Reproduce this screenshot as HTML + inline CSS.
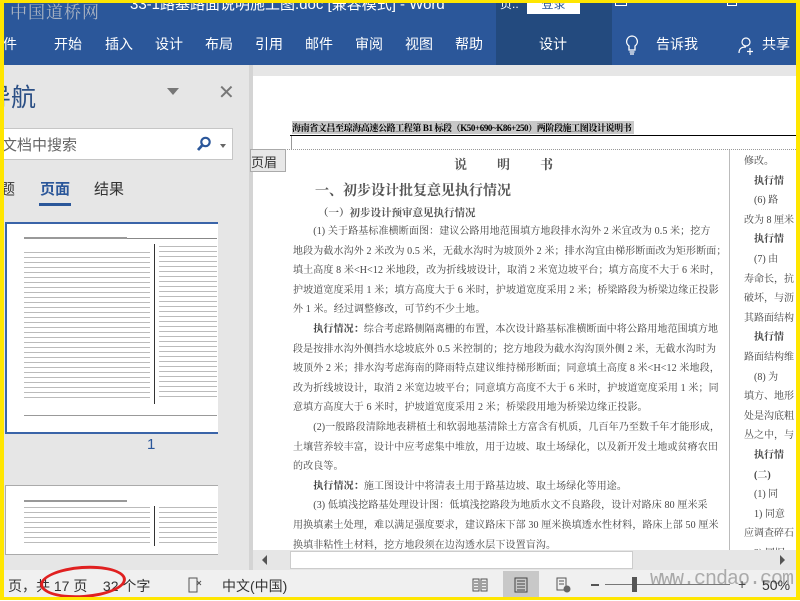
<!DOCTYPE html>
<html><head><meta charset="utf-8"><style>
*{margin:0;padding:0;box-sizing:border-box}
body{width:800px;height:600px;overflow:hidden;background:#fff;font-family:"Liberation Sans","Noto Sans CJK SC",sans-serif;position:relative}
.a{position:absolute;white-space:nowrap}
.tb{left:0;top:0;width:800px;height:65px;background:#2b579a}
.tab{top:34px;color:#fff;font-size:14px}
.doc{font-family:"Liberation Serif","Noto Serif CJK SC","Noto Sans CJK SC",serif;color:#444;font-size:10px}
.lines{background:repeating-linear-gradient(#bbb 0 1px,transparent 1px 5px)}
.body div{white-space:nowrap}
</style></head><body>
<div class="a tb"></div>
<div class="a" style="left:496px;top:0;width:116px;height:65px;background:#234a7e"></div>
<div class="a" style="left:10px;top:-2px;font-size:17px;color:#a9b3c3;letter-spacing:1px;font-family:'Noto Serif CJK SC',serif">中国道桥网</div>
<div class="a" style="left:130px;top:-7px;color:#fff;font-size:15px">33-1路基路面说明施工图.doc [兼容模式] - Word</div>
<div class="a" style="left:500px;top:-5px;color:#fff;font-size:12px">页..</div>
<div class="a" style="left:527px;top:0;width:53px;height:14px;background:#fff;color:#2b579a;font-size:12px;text-align:center;line-height:8px">登录</div>
<div class="a" style="left:615px;top:0;width:12px;height:6px;border:1px solid #fff;border-top:none"></div>
<div class="a" style="left:727px;top:0;width:10px;height:6px;border:1px solid #fff;border-top:none"></div>
<div class="a tab" style="left:3px">件</div>
<div class="a tab" style="left:54px">开始</div>
<div class="a tab" style="left:105px">插入</div>
<div class="a tab" style="left:155px">设计</div>
<div class="a tab" style="left:205px">布局</div>
<div class="a tab" style="left:255px">引用</div>
<div class="a tab" style="left:305px">邮件</div>
<div class="a tab" style="left:355px">审阅</div>
<div class="a tab" style="left:405px">视图</div>
<div class="a tab" style="left:455px">帮助</div>
<div class="a tab" style="left:539px">设计</div>
<svg class="a" style="left:624px;top:34px" width="16" height="22"><path d="M8 2a5.5 5.5 0 0 0-3 10v4h6v-4A5.5 5.5 0 0 0 8 2zM5.5 18h5M6 20h4" fill="none" stroke="#fff" stroke-width="1.3"/></svg>
<div class="a tab" style="left:656px">告诉我</div>
<svg class="a" style="left:738px;top:36px" width="18" height="20"><circle cx="8" cy="6" r="4" fill="none" stroke="#fff" stroke-width="1.2"/><path d="M1 17c0-5 3-6 7-6M12 12v7M9 15.5h6" fill="none" stroke="#fff" stroke-width="1.2"/></svg>
<div class="a tab" style="left:762px">共享</div>
<!-- nav pane -->
<div class="a" style="left:0;top:65px;width:253px;height:505px;background:#e6e6e6"></div>
<div class="a" style="left:-14px;top:78px;font-size:25px;color:#2b4f85">导航</div>
<div class="a" style="left:167px;top:88px;width:0;height:0;border-left:6px solid transparent;border-right:6px solid transparent;border-top:7px solid #777"></div>
<div class="a" style="left:218px;top:80px;font-size:20px;color:#777">✕</div>
<div class="a" style="left:0;top:128px;width:233px;height:32px;background:#fff;border:1px solid #c6c6c6"></div>
<div class="a" style="left:2px;top:134px;font-size:15px;color:#666">文档中搜索</div>
<svg class="a" style="left:196px;top:136px" width="16" height="16"><circle cx="9.5" cy="6" r="4.2" fill="none" stroke="#2b579a" stroke-width="2.2"/><path d="M6.5 9L2 14" stroke="#2b579a" stroke-width="2.8"/></svg>
<div class="a" style="left:220px;top:144px;border-left:3px solid transparent;border-right:3px solid transparent;border-top:4px solid #666"></div>
<div class="a" style="left:0;top:178px;font-size:15px;color:#333">题</div>
<div class="a" style="left:40px;top:178px;font-size:15px;color:#2b579a;font-weight:bold">页面</div>
<div class="a" style="left:94px;top:178px;font-size:15px;color:#333">结果</div>
<div class="a" style="left:39px;top:203px;width:32px;height:3px;background:#2b579a"></div>
<div class="a" style="left:5px;top:222px;width:213px;height:212px;background:#fff;border:2px solid #3a64a8;border-right:none"></div>
<div class="a" style="left:24px;top:237px;width:103px;height:2px;background:#999"></div>
<div class="a" style="left:127px;top:238px;width:90px;height:1px;background:#888"></div>
<div class="a lines" style="left:24px;top:252px;width:126px;height:150px"></div>
<div class="a" style="left:154px;top:244px;width:1px;height:160px;background:#333"></div>
<div class="a lines" style="left:159px;top:246px;width:58px;height:152px"></div>
<div class="a" style="left:24px;top:415px;width:193px;height:1px;background:#999"></div>
<div class="a" style="left:147px;top:436px;font-size:15px;color:#2b579a">1</div>
<div class="a" style="left:5px;top:485px;width:213px;height:70px;background:#fff;border:1px solid #aaa;border-right:none"></div>
<div class="a" style="left:24px;top:500px;width:103px;height:2px;background:#999"></div>
<div class="a lines" style="left:24px;top:507px;width:126px;height:40px"></div>
<div class="a" style="left:154px;top:506px;width:1px;height:40px;background:#333"></div>
<div class="a lines" style="left:159px;top:507px;width:58px;height:40px"></div>
<!-- doc area -->
<div class="a" style="left:249px;top:65px;width:551px;height:11px;background:#e6e6e6"></div>
<div class="a" style="left:249px;top:65px;width:4px;height:505px;background:#d4d4d4"></div>
<div class="a" style="left:292px;top:121px;width:342px;height:13px;background:#c8c8c8"></div>
<div class="a doc" style="left:292px;top:121px;font-size:9px;color:#000;font-weight:bold;letter-spacing:-0.4px">海南省文昌至琼海高速公路工程第 B1 标段（K50+690~K86+250）两阶段施工图设计说明书</div>
<div class="a" style="left:290px;top:135px;width:510px;height:1px;background:#000"></div>
<div class="a" style="left:291px;top:136px;width:1px;height:13px;background:#999"></div>
<div class="a" style="left:253px;top:149px;width:547px;border-top:1px dotted #999"></div>
<div class="a" style="left:250px;top:149px;width:36px;height:23px;background:#e8e8e8;border:1px solid #aaa;font-size:13px;color:#333;padding:2px 0 0 0">页眉</div>
<div class="a" style="left:729px;top:150px;width:1px;height:400px;background:#bbb"></div>
<div class="a doc" style="left:454px;top:154px;font-size:13px;font-weight:bold;color:#555;letter-spacing:30px">说明书</div>
<div class="a doc" style="left:315px;top:180px;font-size:14px;font-weight:bold;color:#555">一、初步设计批复意见执行情况</div>
<div class="a doc" style="left:318px;top:205px;font-size:10.5px;font-weight:bold;color:#555">（一）初步设计预审意见执行情况</div>
<div class="a" style="left:253px;top:218px;width:476px;height:332px;overflow:hidden">
<div class="a doc body" style="left:40px;top:4px;line-height:19.6px;letter-spacing:0.12px">
<div>　　(1) 关于路基标准横断面图：建议公路用地范围填方地段排水沟外 2 米宜改为 0.5 米；挖方</div>
<div>地段为截水沟外 2 米改为 0.5 米，无截水沟时为坡顶外 2 米；排水沟宜由梯形断面改为矩形断面；</div>
<div>填土高度 8 米&lt;H&lt;12 米地段，改为折线坡设计，取消 2 米宽边坡平台；填方高度不大于 6 米时，</div>
<div>护坡道宽度采用 1 米；填方高度大于 6 米时，护坡道宽度采用 2 米；桥梁路段为桥梁边缘正投影</div>
<div>外 1 米。经过调整修改，可节约不少土地。</div>
<div>　　<b>执行情况：</b>综合考虑路侧隔离栅的布置，本次设计路基标准横断面中将公路用地范围填方地</div>
<div>段是按排水沟外侧挡水埝坡底外 0.5 米控制的；挖方地段为截水沟沟顶外侧 2 米，无截水沟时为</div>
<div>坡顶外 2 米；排水沟考虑海南的降雨特点建议维持梯形断面；同意填土高度 8 米&lt;H&lt;12 米地段，</div>
<div>改为折线坡设计，取消 2 米宽边坡平台；同意填方高度不大于 6 米时，护坡道宽度采用 1 米；同</div>
<div>意填方高度大于 6 米时，护坡道宽度采用 2 米；桥梁段用地为桥梁边缘正投影。</div>
<div>　　(2)一般路段清除地表耕植土和软弱地基清除土方富含有机质，几百年乃至数千年才能形成，</div>
<div>土壤营养较丰富，设计中应考虑集中堆放，用于边坡、取土场绿化，以及新开发土地或贫瘠农田</div>
<div>的改良等。</div>
<div>　　<b>执行情况：</b>施工图设计中将清表土用于路基边坡、取土场绿化等用途。</div>
<div>　　(3) 低填浅挖路基处理设计图：低填浅挖路段为地质水文不良路段，设计对路床 80 厘米采</div>
<div>用换填素土处理，难以满足强度要求，建议路床下部 30 厘米换填透水性材料，路床上部 50 厘米</div>
<div>换填非粘性土材料，挖方地段须在边沟透水层下设置盲沟。</div>
</div></div>
<div class="a doc" style="left:744px;top:152px;line-height:19.6px;overflow:hidden;width:52px;height:398px">
<div>修改。</div><div>　<b>执行情</b></div><div>　(6) 路</div><div>改为 8 厘米</div><div>　<b>执行情</b></div><div>　(7) 由</div><div>寿命长，抗</div><div>破坏，与沥</div><div>其路面结构</div><div>　<b>执行情</b></div><div>路面结构维</div><div>　(8) 为</div><div>填方、地形</div><div>处是沟底粗</div><div>丛之中，与</div><div>　<b>执行情</b></div><div>　<b>(二)</b></div><div>　(1) 同</div><div>　1) 同意</div><div>应调查碎石</div><div>　2) 同旧</div>
</div>
<!-- hscroll -->
<div class="a" style="left:253px;top:550px;width:543px;height:20px;background:#e6e6e6"></div>
<div class="a" style="left:262px;top:555px;border-top:5px solid transparent;border-bottom:5px solid transparent;border-right:5px solid #555"></div>
<div class="a" style="left:290px;top:551px;width:343px;height:18px;background:#fff;border:1px solid #ccc"></div>
<div class="a" style="left:780px;top:555px;border-top:5px solid transparent;border-bottom:5px solid transparent;border-left:5px solid #555"></div>
<!-- status -->
<div class="a" style="left:0;top:570px;width:800px;height:30px;background:#f0f0f0"></div>
<div class="a" style="left:8px;top:576px;font-size:14px;color:#333">页，共 17 页&nbsp;&nbsp;&nbsp;&nbsp;32 个字</div>
<div class="a" style="left:40px;top:566px;width:86px;height:32px;border:3px solid #e02020;border-radius:50%;transform:rotate(-4deg)"></div>
<svg class="a" style="left:187px;top:577px" width="16" height="16"><path d="M2 1h8v14H2zM10 4l4 4M14 4l-4 4" fill="none" stroke="#555"/></svg>
<div class="a" style="left:222px;top:576px;font-size:14px;color:#333">中文(中国)</div>
<svg class="a" style="left:472px;top:577px" width="16" height="16"><path d="M1 2h6v12H1zM9 2h6v12H9zM2 5h4M2 8h4M2 11h4M10 5h4M10 8h4M10 11h4" fill="none" stroke="#555"/></svg>
<div class="a" style="left:503px;top:571px;width:36px;height:27px;background:#c8c8c8"></div>
<svg class="a" style="left:513px;top:577px" width="16" height="16"><path d="M2 1h12v14H2zM4 4h8M4 7h8M4 10h8M4 13h8" fill="none" stroke="#444"/></svg>
<svg class="a" style="left:555px;top:577px" width="16" height="16"><path d="M2 1h9v12H2zM4 4h5M4 7h5" fill="none" stroke="#555"/><circle cx="12" cy="12" r="3.5" fill="#666"/></svg>
<div class="a" style="left:591px;top:584px;width:8px;height:2px;background:#555"></div>
<div class="a" style="left:605px;top:584px;width:125px;height:1px;background:#777"></div>
<div class="a" style="left:632px;top:577px;width:5px;height:15px;background:#555"></div>
<div class="a" style="left:650px;top:568px;font-size:20px;color:#aaa;font-family:'Liberation Mono',monospace;letter-spacing:-1px">www.cndao.com</div>
<div class="a" style="left:738px;top:576px;font-size:14px;color:#444">+</div>
<div class="a" style="left:762px;top:577px;font-size:14px;color:#333">50%</div>
<!-- yellow frame -->
<div class="a" style="left:0;top:0;width:800px;height:600px;border:4px solid #ffe600;border-top-width:3px;border-bottom-width:3px"></div>
</body></html>
